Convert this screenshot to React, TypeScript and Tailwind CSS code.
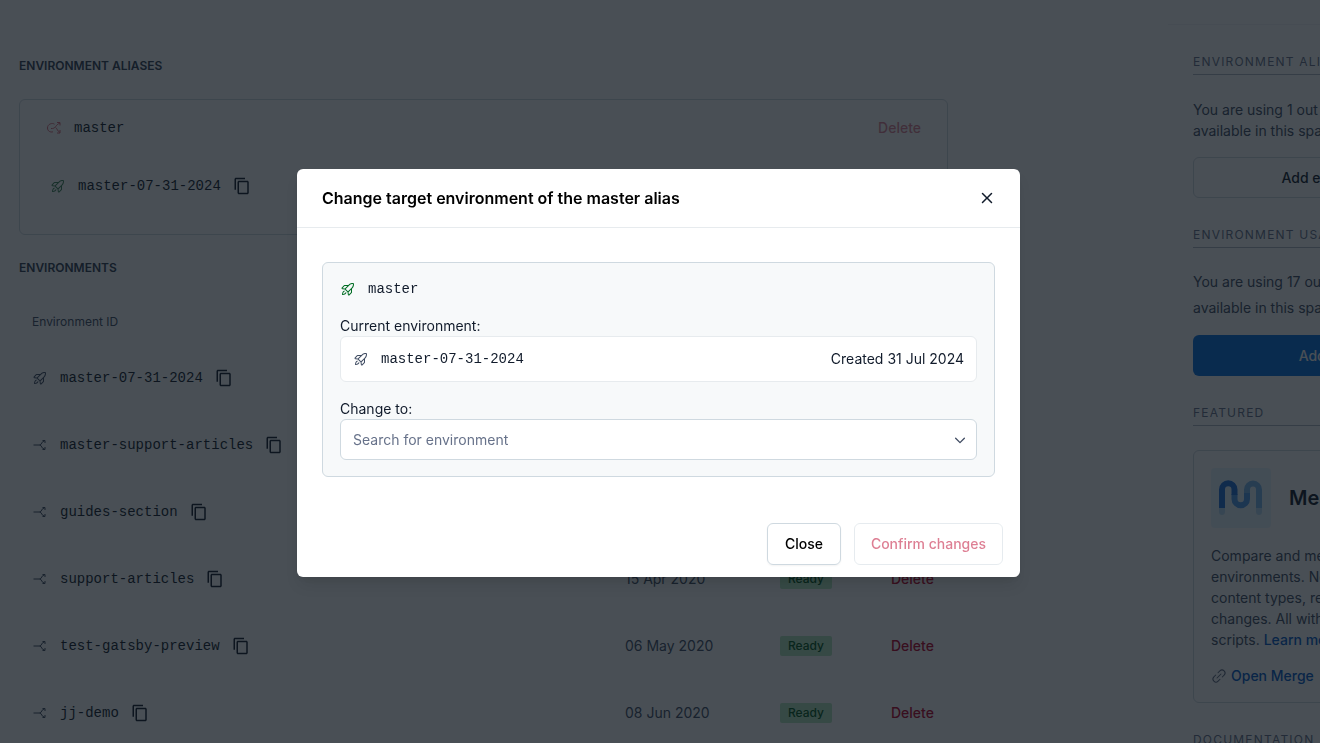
import React, { useState } from 'react';
import { MdContentCopy } from 'react-icons/md';
import { PiCaretDownBold, PiLinkSimple, PiRocketLaunch, PiXBold } from 'react-icons/pi';

interface Environment {
  id: string;
  created?: string;
  isTarget?: boolean;
}

const environments: Environment[] = [
  { id: 'master-07-31-2024', created: '31 Jul 2024', isTarget: true },
  { id: 'master-support-articles' },
  { id: 'guides-section' },
  { id: 'support-articles', created: '15 Apr 2020' },
  { id: 'test-gatsby-preview', created: '06 May 2020' },
  { id: 'jj-demo', created: '08 Jun 2020' },
];

const mono = "font-['Liberation_Mono',monospace]";

const BranchIcon = () => (
  <svg width="16" height="16" viewBox="0 0 16 16" fill="none" stroke="currentColor" className="shrink-0">
    <path d="M1.500 8h6M7.500 8c2.600 0 1.800-4 5-4M7.500 8c2.600 0 1.800 4 5 4" />
    <path d="M10.500 3.500h2.500v2.500M10.500 12.500h2.500v-2.500" />
  </svg>
);

const AliasIcon = () => (
  <svg width="16" height="16" viewBox="0 0 16 16" fill="none" stroke="currentColor" className="shrink-0">
    <path d="M8.500 4.200C6.500 2.600 1.500 3.800 1.500 8c0 3.200 3 4.600 5.500 3.800" />
    <path d="M5 8.500c5 .5 4-3.500 9-5.500M9.500 7.500c2 1 1.500 3.500 4.500 5" />
    <path d="M11 2.500h3v3M11 13h3v-3" />
  </svg>
);

const MergeLogo = () => (
  <svg width="60" height="60" viewBox="0 0 60 60" fill="none" strokeWidth="6" className="rounded bg-[#e8f5ff]">
    <path d="M11 39v5" stroke="#b9dcf5" strokeLinecap="round" />
    <path d="M48 38v6" stroke="#b9dcf5" strokeLinecap="round" />
    <path d="M36 26v-4.500a6 6 0 0 1 12 0V40" stroke="#79b8ee" />
    <path d="M23.500 26v5a6.250 6.250 0 0 0 12.500 0v-6" stroke="#4c9af0" />
    <path d="M11 40V21.500a6.250 6.250 0 0 1 12.500 0V27" stroke="#1f6fdc" />
  </svg>
);

const CopyButton = ({ id }: { id: string }) => (
  <button type="button" aria-label={`Copy ${id}`} className="ml-3 text-[#111b2b]">
    <MdContentCopy size={18} />
  </button>
);

const SidebarHeading = ({ children }: { children: React.ReactNode }) => (
  <h2 className="whitespace-nowrap border-b border-[#aeb9c3] pb-0.5 text-xs leading-5 tracking-widest text-[#67728a]">
    {children}
  </h2>
);

const Sidebar = () => (
  <aside className="-mr-56 mt-6 w-[376px] shrink-0 border-t border-[#f1f4f6] px-[25px] pt-[27px] text-sm text-[#414d63]">
    <SidebarHeading>ENVIRONMENT ALIASES</SidebarHeading>
    <p className="mt-6 leading-[21px]">
      You are using 1 out of 1 environment aliases<br />available in this space.
    </p>
    <button type="button" className="mt-4 h-[41px] w-full rounded-md border border-[#cfd9e0] font-medium text-[#111b2b]">
      Add environment alias
    </button>

    <div className="mt-[27px]">
      <SidebarHeading>ENVIRONMENT USAGE</SidebarHeading>
    </div>
    <p className="mt-[21px] leading-[26px]">
      You are using 17 out of 100 environments<br />available in this space.
    </p>
    <button type="button" className="mt-[14px] h-[41px] w-full rounded-md bg-[#036fe3] font-medium text-white">
      Add environment
    </button>

    <div className="mt-[27px]">
      <SidebarHeading>FEATURED</SidebarHeading>
    </div>
    <div className="mt-6 rounded-md border border-[#cfd9e0] px-[17px] pb-4 pt-[17px]">
      <div className="flex items-center gap-[18px]">
        <MergeLogo />
        <h3 className="text-xl font-semibold text-[#111b2b]">Merge</h3>
      </div>
      <p className="mt-[17px] whitespace-nowrap leading-[21px]">
        Compare and merge changes across<br />
        environments. Now you can review<br />
        content types, review and apply<br />
        changes. All without migration<br />
        scripts. <a href="#learn-more" className="font-medium text-[#0059c8]">Learn more</a>
      </p>
      <a href="#merge" className="mt-[15px] flex items-center gap-1 font-medium leading-[21px] text-[#0059c8]">
        <PiLinkSimple size={16} className="text-[#5a657c]" />
        Open Merge
      </a>
    </div>

    <div className="mt-[27px]">
      <SidebarHeading>DOCUMENTATION</SidebarHeading>
    </div>
  </aside>
);

const EnvironmentsPage = () => (
  <div className="flex items-start">
    <main className="min-w-0 flex-1 pl-[19px] pt-14 text-sm">
      <div className="max-w-[929px]">
        <h2 className="text-xs font-semibold leading-5 text-[#313d52]">ENVIRONMENT ALIASES</h2>
        <section className="mt-[23px] rounded-md border border-[#cfd9e0] px-[26px] pb-[38px] pt-[18px]">
          <div className="flex h-5 items-center text-[#111b2b]">
            <span className="text-[#da6a7c]"><AliasIcon /></span>
            <span className={`ml-3 ${mono}`}>master</span>
            <button type="button" disabled className="ml-auto font-medium text-[#bd002a] opacity-50">Delete</button>
          </div>
          <div className="mt-[38px] flex h-5 items-center pl-1 text-[#111b2b]">
            <PiRocketLaunch size={16} className="text-[#3f8457]" />
            <span className={`ml-3 ${mono}`}>master-07-31-2024</span>
            <CopyButton id="master-07-31-2024" />
          </div>
        </section>

        <h2 className="mt-[23px] text-xs font-semibold leading-5 text-[#313d52]">ENVIRONMENTS</h2>
        <table className="mt-[22px] w-full table-fixed text-left">
          <thead>
            <tr className="h-11">
              <th scope="col" className="pl-[13px] text-xs font-normal text-[#414d63]">Environment ID</th>
              <th className="w-[155px]" />
              <th className="w-[111px]" />
              <th className="w-[57px]" />
            </tr>
          </thead>
          <tbody>
            {environments.map(env => (
              <tr key={env.id} className="h-[67px]">
                <td className="pl-[13px]">
                  <div className="flex items-center text-[#414d63]">
                    {env.isTarget ? <PiRocketLaunch size={16} /> : <BranchIcon />}
                    <span className={`ml-3 text-[#111b2b] ${mono}`}>{env.id}</span>
                    <CopyButton id={env.id} />
                  </div>
                </td>
                <td className="text-[#414d63]">{env.created}</td>
                <td>
                  <span className="inline-block rounded-xs bg-[#b4e8bf] px-2 text-xs font-medium leading-5 text-[#00571c]">Ready</span>
                </td>
                <td>
                  <button type="button" className="font-medium text-[#bd002a]">Delete</button>
                </td>
              </tr>
            ))}
          </tbody>
        </table>
      </div>
    </main>
    <Sidebar />
  </div>
);

const ChangeTargetModal = () => {
  const [search, setSearch] = useState('');

  return (
    <div className="fixed inset-0 flex items-center justify-center bg-[#0c141c]/75 pr-[3px] pt-[3px]">
      <div role="dialog" aria-labelledby="modal-title" className="w-full max-w-[723px] rounded-md bg-white shadow-lg">
        <div className="flex h-[59px] items-center justify-between border-b border-[#e7ebee] pl-[25px] pr-[25px]">
          <h1 id="modal-title" className="text-base font-semibold text-black">
            Change target environment of the master alias
          </h1>
          <button type="button" aria-label="Close dialog" className="text-[#111b2b]">
            <PiXBold size={16} />
          </button>
        </div>

        <div className="px-[25px] pt-[34px]">
          <div className="rounded-md border border-[#cfd9e0] bg-[#f7f9fa] px-[17px] py-4 text-sm leading-5 text-[#111b2b]">
            <div className="flex items-center gap-3">
              <PiRocketLaunch size={16} className="text-[#006d23]" />
              <span className={mono}>master</span>
            </div>
            <p className="mt-[17px]">Current environment:</p>
            <div className="flex h-[46px] items-center gap-3 rounded-md border border-[#e7ebee] bg-white px-3">
              <PiRocketLaunch size={16} className="text-[#414d63]" />
              <span className={mono}>master-07-31-2024</span>
              <span className="ml-auto">Created 31 Jul 2024</span>
            </div>
            <label htmlFor="target-env" className="mt-[17px] block">Change to:</label>
            <div className="relative">
              <input
                id="target-env"
                type="text"
                value={search}
                onChange={e => setSearch(e.target.value)}
                placeholder="Search for environment"
                className="block h-[41px] w-full rounded-md border border-[#cfd9e0] bg-white pl-3 pr-10 placeholder:text-[#67728a]"
              />
              <PiCaretDownBold size={14} className="pointer-events-none absolute right-[10px] top-[14px] text-[#414d63]" />
            </div>
          </div>
        </div>

        <div className="flex justify-end gap-[13px] px-[17px] pb-3 pt-[46px] text-sm font-medium">
          <button type="button" className="h-[42px] rounded-md border border-[#cfd9e0] px-[17px] text-black shadow-xs">Close</button>
          <button type="button" disabled className="h-[42px] rounded-md border border-[#cfd9e0] px-4 text-[#bd002a] opacity-50">
            Confirm changes
          </button>
        </div>
      </div>
    </div>
  );
};

export default function App() {
  return (
    <div className="h-screen overflow-hidden bg-white font-['Inter',sans-serif]">
      <EnvironmentsPage />
      <ChangeTargetModal />
    </div>
  );
}
